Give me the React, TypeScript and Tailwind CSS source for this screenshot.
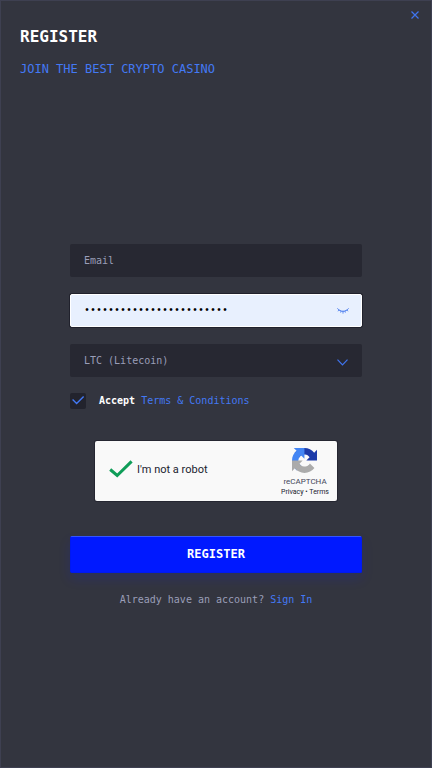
import { useState } from 'react'

const MONO = "font-['DejaVu_Sans_Mono',monospace]"
const FIELD = 'h-[33px] w-full rounded-xs bg-[#272832] px-[14px] text-[10px] text-[#9a9eb8] outline-none'

function CloseIcon() {
  return (
    <svg width="8" height="8" viewBox="0 0 8 8" fill="none" stroke="#3f74ee" strokeWidth="1.2">
      <path d="M0.5 0.5l7 7M7.5 0.5l-7 7" />
    </svg>
  )
}

function ClosedEyeIcon() {
  return (
    <svg width="12" height="6" viewBox="0 0 12 6" fill="none" stroke="#3f74ee" strokeWidth="1">
      <path d="M0.5 0.4C3 4.2 9 4.2 11.5 0.4" />
      <path d="M2.2 2L0.8 3.2M4.2 3L3.6 4.6M6 3.2V5.6M7.8 3L8.4 4.6M9.8 2L11.2 3.2" strokeWidth="0.8" />
    </svg>
  )
}

function RecaptchaLogo() {
  return (
    <svg width="25" height="25" viewBox="0 0 64 64">
      <path fill="#1c3aa9" d="M64 31.955l-.033-1.37V4.687l-7.16 7.16C50.948 4.674 42.033.093 32.05.093c-10.4 0-19.622 4.96-25.458 12.64l11.736 11.86a15.55 15.55 0 0 1 4.754-5.334c2.05-1.6 4.952-2.906 8.968-2.906.485 0 .86.057 1.135.163 4.976.393 9.288 3.14 11.828 7.124l-8.307 8.307L64 31.953" />
      <path fill="#4285f4" d="M31.862.094l-1.37.033H4.594l7.16 7.16C4.58 13.147 0 22.06 0 32.046c0 10.4 4.96 19.622 12.64 25.458L24.5 45.768a15.55 15.55 0 0 1-5.334-4.754c-1.6-2.05-2.906-4.952-2.906-8.968 0-.485.057-.86.163-1.135.393-4.976 3.14-9.288 7.124-11.828l8.307 8.307L31.86.095" />
      <path fill="#ababab" d="M.001 32.045l.033 1.37v25.898l7.16-7.16c5.86 7.173 14.774 11.754 24.76 11.754 10.4 0 19.622-4.96 25.458-12.64l-11.736-11.86a15.55 15.55 0 0 1-4.754 5.334c-2.05 1.6-4.952 2.906-8.968 2.906-.485 0-.86-.057-1.135-.163-4.976-.393-9.288-3.14-11.828-7.124l8.307-8.307-27.296-.008" />
    </svg>
  )
}

function Captcha() {
  return (
    <div className="mx-auto mt-8 flex h-[60px] w-[242px] items-center justify-between rounded-xs bg-[#f9f9f9] pr-2 pl-[14px] font-[Roboto,sans-serif] text-[#20222f] ring-1 ring-[#252631]">
      <div className="flex items-center gap-1">
        <svg className="-mt-1" width="24" height="18" viewBox="0 0 24 18" fill="none" stroke="#0f9d58" strokeWidth="3">
          <path d="M1.2 9.5l7 6L22.6 1.4" />
        </svg>
        <span className="text-[11px]">I'm not a robot</span>
      </div>
      <div className="flex flex-col items-center pt-1">
        <RecaptchaLogo />
        <span className="mt-1 text-[8px] leading-[10px] text-[#454759]">reCAPTCHA</span>
        <span className="text-[7px] leading-[10px] whitespace-nowrap">
          <a href="#privacy">Privacy</a> • <a href="#terms">Terms</a>
        </span>
      </div>
    </div>
  )
}

export default function App() {
  const [email, setEmail] = useState('')
  const [password, setPassword] = useState('correct-horse-battery-99')
  const [currency, setCurrency] = useState('LTC')
  const [accepted, setAccepted] = useState(true)

  return (
    <div className={`flex min-h-screen flex-col border border-[#3e4051] bg-[#33353f] ${MONO}`}>
      <header className="relative px-[19px] pt-6 pb-[3px]">
        <h1 className="text-[16px] leading-6 font-bold text-white">REGISTER</h1>
        <p className="mt-2 text-[12px] leading-6 text-[#4379f5]">JOIN THE BEST CRYPTO CASINO</p>
        <button type="button" aria-label="Close" className="absolute top-[10px] right-3">
          <CloseIcon />
        </button>
      </header>

      <main className="flex flex-1 flex-col justify-center px-[69px]">
        <form onSubmit={e => e.preventDefault()}>
          <div className="flex flex-col gap-[17px]">
            <input
              type="email"
              aria-label="Email"
              placeholder="Email"
              value={email}
              onChange={e => setEmail(e.target.value)}
              className={`${FIELD} placeholder:text-[#9a9eb8]`}
            />
            <div className="relative">
              <input
                type="password"
                aria-label="Password"
                value={password}
                onChange={e => setPassword(e.target.value)}
                className="block h-[33px] w-full rounded-xs border border-white bg-[#e8f0fe] px-[13px] font-['Liberation_Mono',monospace] text-[10px] text-black ring-1 ring-[#20212c] outline-none"
              />
              <button type="button" aria-label="Show password" className="absolute top-[14px] right-[13px]">
                <ClosedEyeIcon />
              </button>
            </div>
            <div className="relative">
              <select
                aria-label="Currency"
                value={currency}
                onChange={e => setCurrency(e.target.value)}
                className={`${FIELD} block appearance-none`}
              >
                <option value="LTC">LTC (Litecoin)</option>
                <option value="BTC">BTC (Bitcoin)</option>
                <option value="ETH">ETH (Ethereum)</option>
              </select>
              <svg className="pointer-events-none absolute top-[15px] right-[14px]" width="11" height="7" viewBox="0 0 11 7" fill="none" stroke="#3f74ee" strokeWidth="1.2">
                <path d="M0.5 0.6L5.5 5.8 10.5 0.6" />
              </svg>
            </div>
          </div>

          <div className="mt-4 flex items-center gap-[13px] text-[10px] leading-4">
            <span className="relative h-4 w-4">
              <input
                id="accept"
                type="checkbox"
                checked={accepted}
                onChange={e => setAccepted(e.target.checked)}
                className="block h-4 w-4 appearance-none rounded-xs bg-[#22232d]"
              />
              {accepted && (
                <svg className="pointer-events-none absolute inset-0" width="16" height="16" viewBox="0 0 16 16" fill="none" stroke="#4379f5" strokeWidth="1.4">
                  <path d="M2.6 6.6l4 4L13.6 3.4" />
                </svg>
              )}
            </span>
            <span>
              <label htmlFor="accept" className="font-bold text-white">Accept</label>{' '}
              <a href="#terms-conditions" className="text-[#4379f5]">Terms &amp; Conditions</a>
            </span>
          </div>

          <Captcha />

          <button
            type="submit"
            className="mt-[35px] block h-[37px] w-full rounded-xs border border-[#0019f0] border-t-[#3355ff] bg-[#0019ff] text-[12px] font-bold text-white shadow-[0_6px_12px_rgba(0,25,255,0.15)]"
          >
            REGISTER
          </button>
        </form>
        <p className="mt-[19px] text-center text-[10px] leading-4 text-[#9a9eb8]">
          Already have an account? <a href="#sign-in" className="text-[#4379f5]">Sign In</a>
        </p>
      </main>
    </div>
  )
}
